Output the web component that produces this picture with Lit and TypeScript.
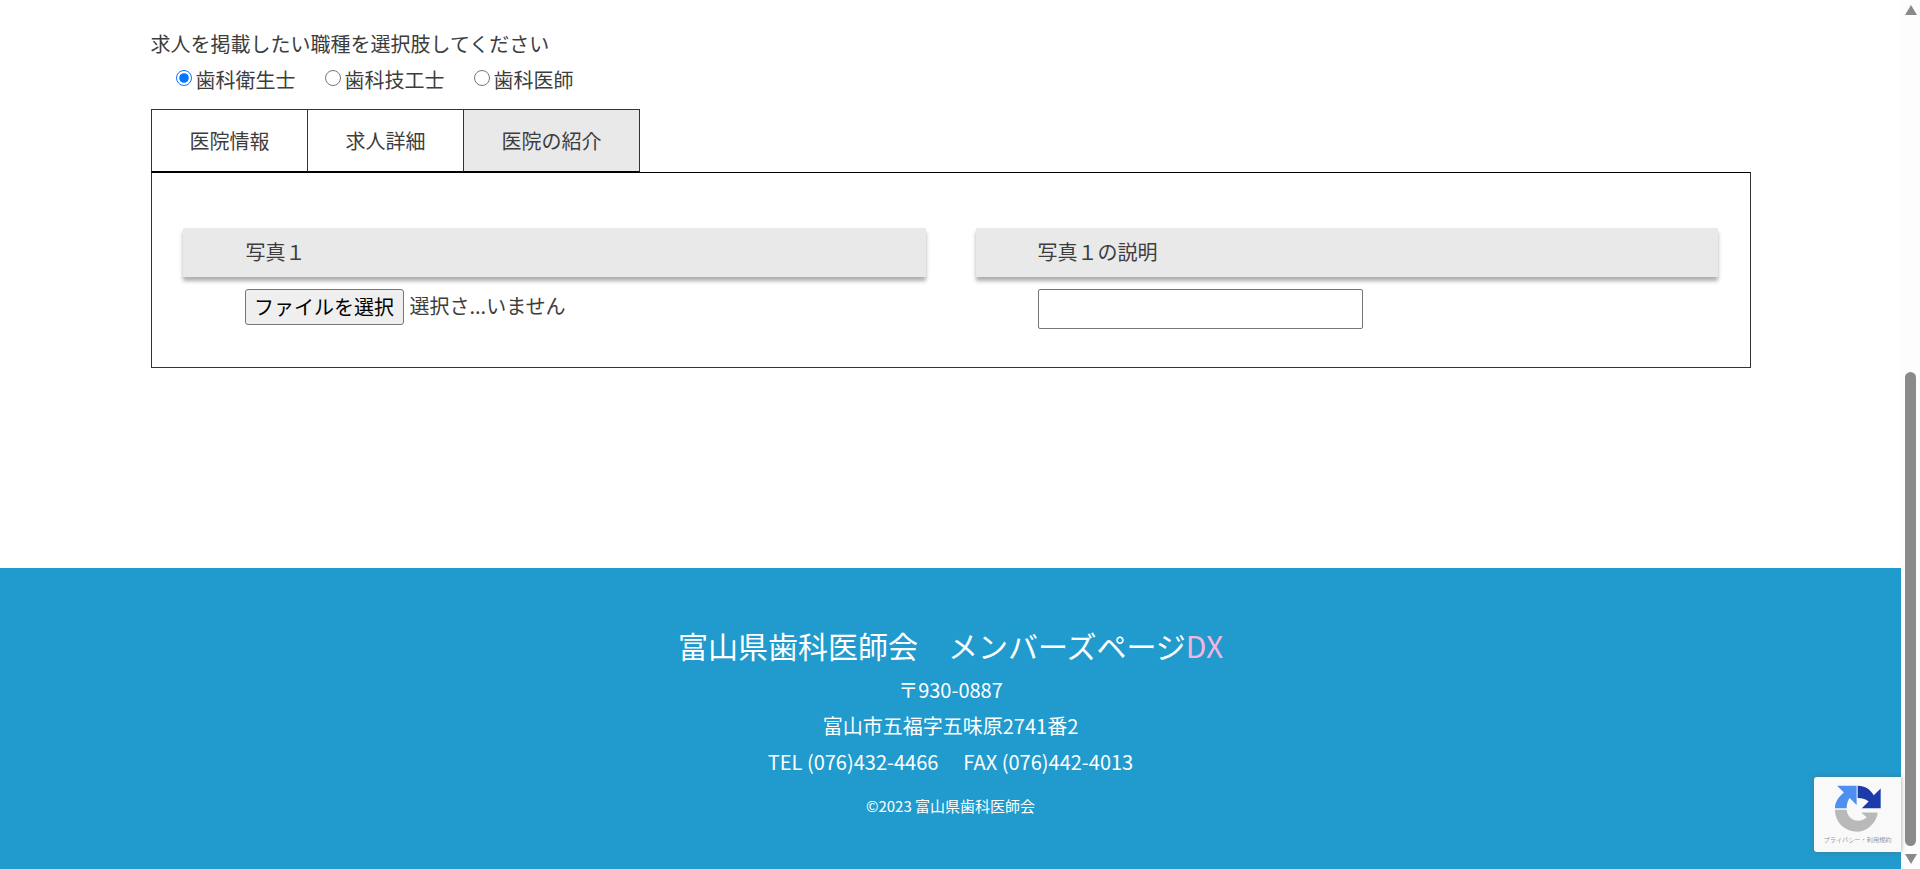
import { LitElement, html, css } from "lit";
import { customElement } from "lit/decorators.js";

@customElement("app-root")
export class AppRoot extends LitElement {
  static styles = css`
    :host {
      display: flex;
      height: 869px;
      overflow: hidden;
      background: #fff;
      color: #3d3d3d;
      font-family: "Noto Sans CJK JP", "Noto Sans", sans-serif;
      font-size: 20px;
      line-height: 36px;
    }
    .page {
      flex: 1;
      min-width: 0;
      position: relative;
      display: flex;
      flex-direction: column;
    }
    .main {
      width: 1600px;
      margin: 0 auto;
      padding-top: 26px;
      flex: 1;
    }
    .radios {
      display: flex;
      padding-left: 25px;
      margin-bottom: 11px;
    }
    .radio {
      display: flex;
      align-items: center;
      margin-right: 29px;
    }
    .radio input {
      width: 16px;
      height: 16px;
      margin: 0 4px 4px 0;
      flex: none;
    }
    .tabs {
      display: flex;
    }
    .tab {
      padding: 13px 37px 12px 38px;
      border: 1px solid #333;
      border-bottom: 1px solid #000;
      margin-right: -1px;
      background: #fff;
      position: relative;
    }
    .tab.active {
      background: #e9e9e9;
      margin-right: 0;
    }
    .panel {
      border: 1px solid #333;
      border-top-color: #000;
      padding: 55px 32px 30px 31px;
      display: grid;
      grid-template-columns: 743px 742px;
      justify-content: space-between;
      height: 196px;
      box-sizing: border-box;
    }
    .field-head {
      background: #e9e9e9;
      height: 49px;
      line-height: 47px;
      padding-left: 62px;
      box-shadow: 0 4px 4px rgba(0, 0, 0, 0.32);
    }
    .field-head.first {
      padding-left: 63px;
    }
    .field-body {
      padding: 12px 0 0 62px;
      display: flex;
      align-items: flex-start;
    }
    .file-btn {
      font: inherit;
      font-size: 20px;
      line-height: 26px;
      width: 159px;
      height: 36px;
      padding: 0;
      color: #000;
      background: #efefef;
      border: 1px solid #767676;
      border-radius: 3px;
      margin-right: 5px;
    }
    .file-name {
      line-height: 34px;
      margin-left: 1px;
    }
    .text-input {
      width: 325px;
      height: 40px;
      box-sizing: border-box;
      border: 1px solid #767676;
      border-radius: 2px;
      background: #fff;
    }
    footer {
      height: 301px;
      box-sizing: border-box;
      background: #219bcd;
      color: #fff;
      text-align: center;
      padding-top: 52px;
    }
    .title {
      font-size: 30px;
      line-height: 50px;
      margin-bottom: 2px;
    }
    .dx {
      color: #f7b3dc;
    }
    .copy {
      font-size: 15px;
      line-height: 29px;
      margin-top: 11px;
    }
    .tel-gap {
      margin-left: 25px;
    }
    .badge {
      position: absolute;
      right: 0;
      top: 777px;
      width: 87px;
      height: 75px;
      background: #f9f9f9;
      border-radius: 3px 0 0 3px;
      box-shadow: 0 0 5px rgba(100, 100, 100, 0.6);
      display: flex;
      flex-direction: column;
      align-items: center;
      color: #9a9a9a;
      font-size: 6.2px;
      line-height: 10px;
    }
    .badge svg {
      margin-top: 1px;
      margin-left: 1px;
      display: block;
      filter: blur(0.4px);
    }
    .badge-text {
      margin-top: -5px;
      white-space: nowrap;
    }
    .scrollbar {
      width: 19px;
      flex: none;
      background: #fdfdfd;
      display: flex;
      flex-direction: column;
      align-items: center;
      box-sizing: border-box;
      padding-top: 5px;
    }
    .arrow-up,
    .arrow-down {
      width: 0;
      height: 0;
      border-left: 6.5px solid transparent;
      border-right: 6.5px solid transparent;
    }
    .arrow-up {
      border-bottom: 10px solid #8a8a8a;
    }
    .arrow-down {
      border-top: 10px solid #8a8a8a;
      margin-top: 8px;
    }
    .thumb {
      width: 11px;
      height: 474px;
      margin-top: 357px;
      background: #8a8a8a;
      border-radius: 6px;
    }
  `;

  render() {
    return html`
      <div class="page">
        <div class="main">
          <div>求人を掲載したい職種を選択肢してください</div>
          <div class="radios">
            <label class="radio"><input type="radio" name="job" checked />歯科衛生士</label>
            <label class="radio"><input type="radio" name="job" />歯科技工士</label>
            <label class="radio"><input type="radio" name="job" />歯科医師</label>
          </div>
          <div class="tabs">
            <div class="tab">医院情報</div>
            <div class="tab">求人詳細</div>
            <div class="tab active">医院の紹介</div>
          </div>
          <div class="panel">
            <div>
              <div class="field-head first">写真１</div>
              <div class="field-body">
                <button class="file-btn">ファイルを選択</button>
                <span class="file-name">選択さ...いません</span>
              </div>
            </div>
            <div>
              <div class="field-head">写真１の説明</div>
              <div class="field-body"><input class="text-input" type="text" /></div>
            </div>
          </div>
        </div>
        <footer>
          <div class="title">富山県歯科医師会　メンバーズページ<span class="dx">DX</span></div>
          <div>〒930-0887</div>
          <div>富山市五福字五味原2741番2</div>
          <div>TEL (076)432-4466<span class="tel-gap">FAX (076)442-4013</span></div>
          <div class="copy">©2023 富山県歯科医師会</div>
        </footer>
        <div class="badge">
          <svg width="68" height="62" viewBox="0 0 198 180">
            <path fill="#1c3aa9" d="M98 22 C120 22 135 33 145 50 L165 30 V88 H110 L130 68 C123 62 112 58 98 58 Z" />
            <path fill="#4f8ff0" d="M32 88 C32 70 42 55 58 42 L38 22 H95 V78 L75 58 C70 64 66 75 66 88 Z" />
            <path fill="#b9b9b9" d="M32 92 H66 C68 112 82 124 100 124 C110 124 118 120 124 114 L108 100 H156 C156 122 130 156 98 156 C60 156 32 128 32 92 Z" />
          </svg>
          <div class="badge-text">プライバシー・利用規約</div>
        </div>
      </div>
      <div class="scrollbar">
        <div class="arrow-up"></div>
        <div class="thumb"></div>
        <div class="arrow-down"></div>
      </div>
    `;
  }
}
